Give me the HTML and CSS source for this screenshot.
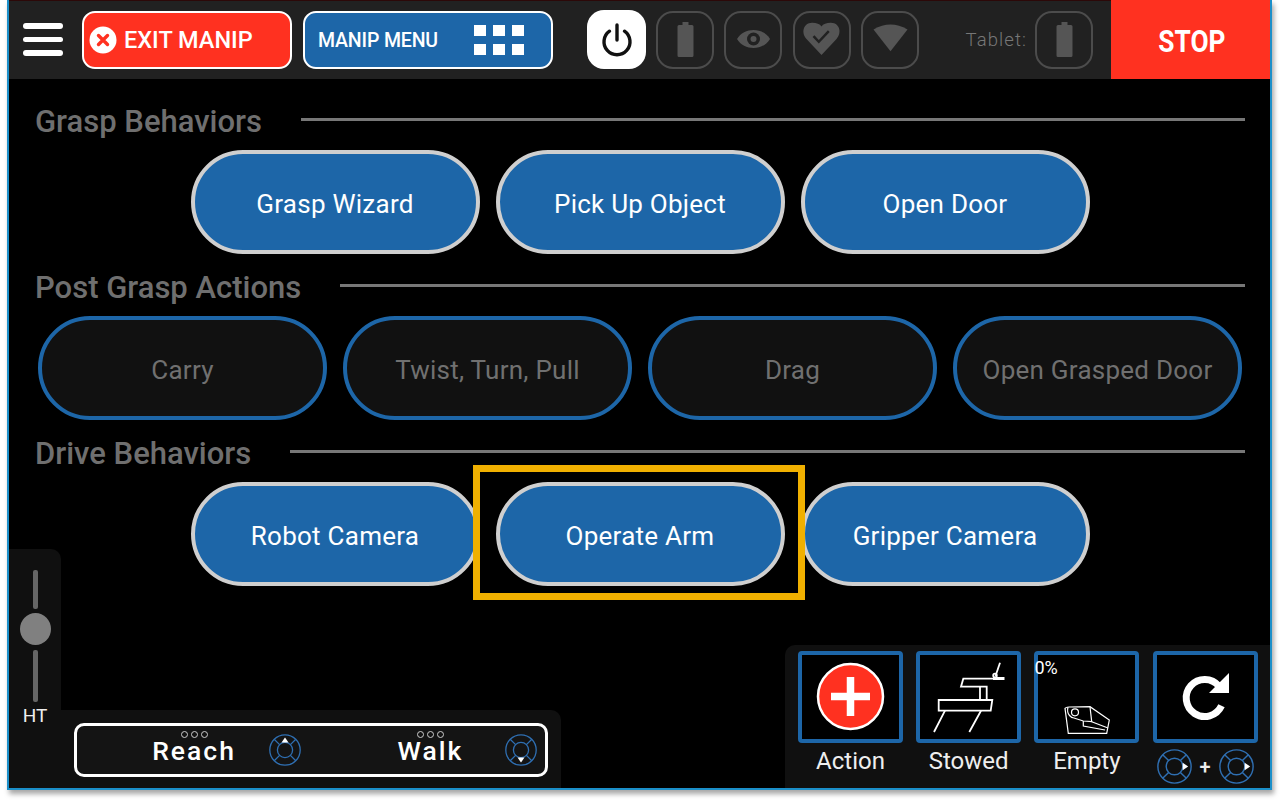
FILE: index.html
```html
<!DOCTYPE html>
<html lang="en">
<head>
<meta charset="utf-8"/>
<title>Manipulation</title>
<link rel="stylesheet" href="styles.css">
</head>
<body>
<svg class="defs" width="0" height="0">
  <symbol id="ring" viewBox="0 0 32 32">
    <g fill="none" stroke="#2f6fb2" stroke-width="1.3">
      <circle cx="16" cy="16" r="15.2"/>
      <circle cx="16" cy="16" r="7.6"/>
      <path d="M10.6 10.6 5.2 5.2M21.4 10.6 26.8 5.2M10.6 21.4 5.2 26.8M21.4 21.4 26.8 26.8"/>
    </g>
  </symbol>
  <symbol id="battery" viewBox="0 0 53 53">
    <path d="M23.500 9h6v3h3.500a1.500 1.500 0 0 1 1.500 1.500v29a1.500 1.500 0 0 1-1.500 1.500H20a1.500 1.500 0 0 1-1.500-1.500v-29A1.500 1.500 0 0 1 20 12h3.500z" fill="#555"/>
  </symbol>
</svg>
<div class="screen">
  <!-- barre du haut -->
  <header class="topbar">
    <div class="burger"><span></span><span></span><span></span></div>
    <div class="btn-exit">
      <svg width="28" height="28" viewBox="0 0 28 28">
        <circle cx="14" cy="14" r="13.5" fill="#fff"/>
        <path d="M9.500 9.500 18.500 18.500M18.500 9.500 9.500 18.500" stroke="#ff3120" stroke-width="3.400" stroke-linecap="round"/>
      </svg>
      <span>EXIT MANIP</span>
    </div>
    <div class="btn-menu">
      <span>MANIP MENU</span>
      <div class="menu-grid"><i></i><i></i><i></i><i></i><i></i><i></i></div>
    </div>
    <div class="status status-power">
      <svg width="34" height="36" viewBox="0 0 34 36" fill="none" stroke="#111" stroke-width="3.400" stroke-linecap="round">
        <path d="M17 3v15"/>
        <path d="M9.500 9.200a13 13 0 1 0 15 0"/>
      </svg>
    </div>
    <div class="status"><svg width="53" height="53"><use href="#battery"/></svg></div>
    <div class="status">
      <svg width="53" height="53" viewBox="0 0 53 53">
        <path d="M10 26C17 14 36 14 43 26 36 38 17 38 10 26z" fill="#555"/>
        <circle cx="26.500" cy="26" r="6.500" fill="#212121"/>
        <circle cx="26.500" cy="26" r="3" fill="#555"/>
      </svg>
    </div>
    <div class="status">
      <svg width="53" height="53" viewBox="0 0 53 53">
        <path d="M26.500 42 11.500 26C6 20 8 10 17 9.800 21 9.700 25 11 26.500 13.500 28 11 32 9.700 36 9.800 45 10 47 20 41.500 26z" fill="#555"/>
        <path d="M18.500 23.200 23.800 28.800 33.800 18.200" fill="none" stroke="#212121" stroke-width="2.500"/>
      </svg>
    </div>
    <div class="status">
      <svg width="53" height="53" viewBox="0 0 53 53">
        <path d="M26.500 38.200 9.500 16.500Q26.500 6.500 43.500 16.500z" fill="#555"/>
      </svg>
    </div>
    <div class="tablet-label">Tablet:</div>
    <div class="status"><svg width="53" height="53"><use href="#battery"/></svg></div>
    <div class="btn-stop"><span>STOP</span></div>
  </header>

  <main class="content">
    <section class="group">
      <div class="group-title"><h2>Grasp Behaviors</h2><hr></div>
      <div class="row">
        <div class="pill">Grasp Wizard</div>
        <div class="pill">Pick Up Object</div>
        <div class="pill">Open Door</div>
      </div>
    </section>
    <section class="group">
      <div class="group-title"><h2>Post Grasp Actions</h2><hr></div>
      <div class="row">
        <div class="pill pill-off">Carry</div>
        <div class="pill pill-off">Twist, Turn, Pull</div>
        <div class="pill pill-off">Drag</div>
        <div class="pill pill-off">Open Grasped Door</div>
      </div>
    </section>
    <section class="group">
      <div class="group-title"><h2>Drive Behaviors</h2><hr></div>
      <div class="row">
        <div class="pill">Robot Camera</div>
        <div class="pill pill-focus">Operate Arm</div>
        <div class="pill">Gripper Camera</div>
      </div>
    </section>
  </main>

  <div class="docks">
    <div class="dock-left">
      <div class="slider">
        <div class="track track-top"></div>
        <div class="thumb"></div>
        <div class="track track-bottom"></div>
      </div>
      <div class="mode-panel">
        <div class="ht">HT</div>
        <div class="mode-box">
          <div class="mode">
            <div class="mode-text"><div class="dots"><i></i><i></i><i></i></div>Reach</div>
            <svg class="ring" viewBox="0 0 32 32">
              <use href="#ring"/>
              <path d="M16 3.500 19.500 8.500H12.500z" fill="#fff"/>
            </svg>
          </div>
          <div class="mode mode-walk">
            <div class="mode-text"><div class="dots"><i></i><i></i><i></i></div>Walk</div>
            <svg class="ring" viewBox="0 0 32 32">
              <use href="#ring"/>
              <path d="M16 28.500 19.500 23.500H12.500z" fill="#fff"/>
            </svg>
          </div>
        </div>
      </div>
    </div>

    <div class="dock-right">
      <div class="tool">
        <div class="tile">
          <svg width="97" height="84" viewBox="0 0 97 84">
            <circle cx="48.500" cy="41.500" r="32.500" fill="#ff3120" stroke="#fff" stroke-width="2.500"/>
            <path d="M48.500 22v39M29 41.500h39" stroke="#fff" stroke-width="7.500"/>
          </svg>
        </div>
        <div class="tool-label">Action</div>
      </div>
      <div class="tool">
        <div class="tile">
          <svg width="97" height="84" viewBox="0 0 97 84" fill="none" stroke="#fff" stroke-width="1.800">
            <path d="M80 7.700 75.500 21"/>
            <path d="M73 23.500h11.500" stroke-width="3"/>
            <circle cx="75" cy="20.500" r="1.800"/>
            <path d="M84 23.700H43.300L41 31.700H66.700V45M60 31.700V45"/>
            <path d="M18.700 45H72.300L70.700 55.700H18.700z"/>
            <path d="M25 55.700 14 77M61 55.700 49.300 77"/>
          </svg>
        </div>
        <div class="tool-label">Stowed</div>
      </div>
      <div class="tool">
        <div class="tile">
          <span class="percent">0%</span>
          <svg width="97" height="84" viewBox="0 0 97 84" fill="none" stroke="#fff" stroke-width="1.200">
            <path d="M27 53.300Q28 52 31 52L52 51.700 71.300 65 68.700 78.300H30.300z"/>
            <circle cx="37" cy="57.300" r="3.500"/>
            <path d="M30 52C28 60 34 63 36 63L45.300 66 53.700 66.700 52 51.700"/>
            <path d="M45.300 66V71L67 75M53.700 66.700 70 73"/>
          </svg>
        </div>
        <div class="tool-label">Empty</div>
      </div>
      <div class="tool">
        <div class="tile">
          <svg width="97" height="84" viewBox="0 0 97 84">
            <path d="M61.900 31.100A18.500 18.500 0 1 0 64.500 50.800" fill="none" stroke="#fff" stroke-width="7"/>
            <path d="M72 18V38H52z" fill="#fff"/>
          </svg>
        </div>
        <div class="combo">
          <svg class="ring" viewBox="0 0 32 32">
            <use href="#ring"/>
            <path d="M28.500 16 23.500 12.500V19.500z" fill="#fff"/>
          </svg>
          <span>+</span>
          <svg class="ring" viewBox="0 0 32 32">
            <use href="#ring"/>
            <path d="M28.500 16 23.500 12.500V19.500z" fill="#fff"/>
          </svg>
        </div>
      </div>
    </div>
  </div>
</div>
</body>
</html>
```

FILE: styles.css
```css
html,
body {
  height: 803px;
}

body {
  margin: 0;
  padding: 0;
  background: #fff;
  font-family: 'Roboto', 'Liberation Sans', sans-serif;
  overflow: hidden;
}

.defs {
  position: absolute;
}

.screen {
  position: relative;
  box-sizing: border-box;
  width: 1265px;
  height: 790px;
  margin-left: 7px;
  background: #000;
  border: 2px solid #1b8fc9;
  border-top: none;
  box-shadow: 2px 4px 5px rgba(0, 0, 0, 0.35);
}

/* barre du haut */
.topbar {
  display: flex;
  align-items: center;
  height: 79px;
  box-sizing: border-box;
  padding: 0 0 1px 14px;
  background: #212121;
  border-top: 1px solid #2c0808;
}

.burger {
  display: flex;
  flex-direction: column;
  gap: 8px;
  width: 40px;
  margin-right: 19px;
}

.burger span {
  display: block;
  height: 5.500px;
  border-radius: 3px;
  background: #fff;
}

.btn-exit,
.btn-menu {
  display: flex;
  align-items: center;
  box-sizing: border-box;
  height: 58px;
  border: 2px solid #fff;
  border-radius: 13px;
  color: #fff;
}

.btn-exit {
  width: 210px;
  gap: 7px;
  padding-left: 5px;
  background: #ff3120;
  font-size: 23.500px;
  font-weight: 500;
  margin-right: 11px;
}

.btn-menu {
  width: 250px;
  padding: 0 27px 0 13px;
  justify-content: space-between;
  background: #1d66a8;
  font-size: 19.500px;
  font-weight: 500;
  letter-spacing: -0.150px;
  margin-right: 34px;
}

.btn-menu span {
  padding-top: 2px;
}

.menu-grid {
  display: grid;
  grid-template-columns: repeat(3, 12px);
  grid-auto-rows: 11px;
  gap: 8px 7px;
}

.menu-grid i {
  background: #fff;
}

.status {
  display: flex;
  align-items: center;
  justify-content: center;
  box-sizing: border-box;
  width: 58px;
  height: 58px;
  margin-right: 10.400px;
  border: 2px solid #4c4c4c;
  border-radius: 17px;
}

.status-power {
  width: 59px;
  height: 59px;
  margin-right: 10px;
  background: #fff;
  border: none;
}

.tablet-label {
  margin: 0 8px 0 36px;
  color: #777;
  font-size: 18.500px;
  font-weight: 300;
  letter-spacing: 1.100px;
}

.btn-stop {
  display: flex;
  align-items: center;
  justify-content: center;
  align-self: stretch;
  width: 159px;
  margin: -1px 0 -1px auto;
  padding: 2px 0 0 3px;
  box-sizing: border-box;
  background: #ff3120;
  color: #fff;
  font-size: 32px;
  font-weight: 700;
}

.btn-stop span {
  transform: scaleX(0.82);
}

/* groupes de boutons */
.content {
  padding: 21px 25px 0 26px;
}

.group {
  margin-bottom: 12px;
}

.group-title {
  display: flex;
  align-items: center;
  gap: 39px;
  height: 42px;
  margin-bottom: 8px;
}

.group-title h2 {
  margin: 0;
  color: #6f6f6f;
  font-size: 31px;
  font-weight: 500;
  white-space: nowrap;
}

.group-title hr {
  flex: 1;
  height: 3px;
  margin: -4px 0 0 0;
  border: none;
  background: #777;
}

.row {
  display: flex;
  justify-content: center;
  gap: 16px;
}

.pill {
  display: flex;
  align-items: center;
  justify-content: center;
  position: relative;
  box-sizing: border-box;
  width: 289px;
  height: 104px;
  padding-top: 3px;
  border: 4px solid #cfcfcf;
  border-radius: 52px;
  background: #1d66a8;
  color: #fff;
  font-size: 26px;
  letter-spacing: 0.250px;
}

.pill-off {
  background: #111;
  border-color: #1d66a8;
  color: #707070;
}

.pill-focus {
  z-index: 2;
}

.pill-focus::after {
  content: "";
  position: absolute;
  top: -21px;
  left: -27px;
  right: -24px;
  bottom: -18px;
  border: 7px solid #f0b000;
}

/* panneaux du bas */
.docks {
  position: absolute;
  left: 0;
  right: 0;
  bottom: 0;
  display: flex;
  justify-content: space-between;
  align-items: flex-end;
  z-index: 3;
}

.dock-left {
  display: flex;
  flex-direction: column;
}

.slider {
  display: flex;
  flex-direction: column;
  align-items: center;
  box-sizing: border-box;
  width: 52px;
  height: 161px;
  padding-top: 21px;
  background: #101010;
  border-top-right-radius: 10px;
}

.track {
  width: 5px;
  border-radius: 2px;
  background: #666;
}

.track-top {
  height: 39px;
}

.track-bottom {
  height: 52px;
}

.thumb {
  width: 31px;
  height: 32px;
  margin: 4px 0 5px;
  border-radius: 50%;
  background: #808080;
}

.mode-panel {
  display: flex;
  box-sizing: border-box;
  width: 552px;
  height: 78px;
  background: #101010;
  border-top-right-radius: 10px;
}

.ht {
  width: 52px;
  margin-top: -5px;
  color: #eee;
  font-size: 19px;
  line-height: 21px;
  text-align: center;
}

.mode-box {
  display: flex;
  box-sizing: border-box;
  width: 474px;
  height: 54px;
  margin: 13px 0 0 13px;
  border: 3px solid #fff;
  border-radius: 10px;
  background: #141414;
}

.mode {
  display: flex;
  flex: none;
  align-items: center;
  box-sizing: border-box;
  width: 234px;
  padding-left: 41px;
}

.mode-walk {
  padding-left: 43.500px;
}

.mode-walk .ring {
  margin-left: -2px;
}

.mode-text {
  position: relative;
  flex: none;
  width: 152px;
  color: #fff;
  font-size: 26.500px;
  font-weight: 500;
  letter-spacing: 2px;
  text-align: center;
}

.dots {
  position: absolute;
  top: -4px;
  left: 0;
  right: 0;
  display: flex;
  justify-content: center;
  gap: 3px;
}

.dots i {
  box-sizing: border-box;
  width: 7px;
  height: 7px;
  border: 1px solid #ccc;
  border-radius: 50%;
}

.ring {
  width: 32px;
  height: 32px;
  flex: none;
  margin-left: -1px;
}

.dock-right {
  display: grid;
  grid-template-columns: repeat(4, 105px);
  gap: 13.200px;
  box-sizing: border-box;
  width: 485px;
  height: 143px;
  padding: 6px 0 0 13px;
  background: #101010;
  border-top-left-radius: 10px;
}

.tool {
  display: flex;
  flex-direction: column;
  align-items: center;
}

.tile {
  position: relative;
  box-sizing: border-box;
  width: 105px;
  height: 92px;
  border: 4px solid #1d66a8;
  border-radius: 4px;
  background: #000;
}

.tile svg {
  display: block;
}

.percent {
  position: absolute;
  top: 2px;
  left: -4px;
  color: #fff;
  font-size: 18px;
}

.tool-label {
  margin-top: 4px;
  color: #eee;
  font-size: 24px;
  line-height: 28px;
}

.combo {
  display: flex;
  align-items: center;
  gap: 8px;
  margin-top: 6px;
  color: #eee;
  font-size: 20px;
  font-weight: 500;
}

.combo .ring {
  width: 35px;
  height: 35px;
  margin-left: 0;
}
```
